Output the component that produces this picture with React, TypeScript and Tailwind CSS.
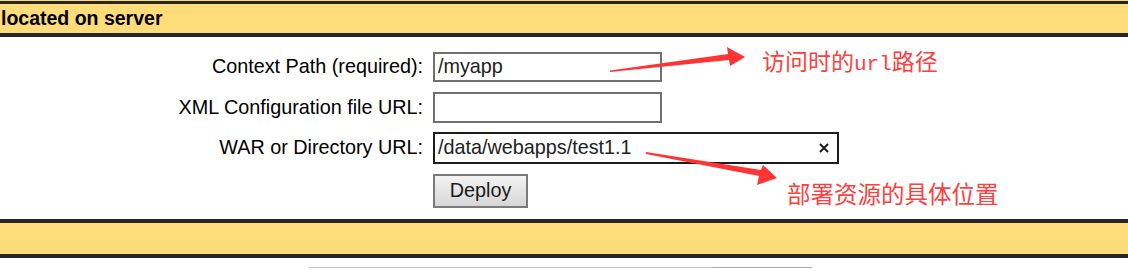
export default function App() {
  return (
    <div className="relative w-[1128px] h-[269px] overflow-hidden bg-white font-['Liberation_Sans',Arial,sans-serif] text-[19.8px] text-black">
      <div className="h-[1px] bg-[#ffdc7a]" />
      <div className="border-t-[3px] border-b-[4px] border-[#262626] bg-[#ffdc7a] h-[36px] flex items-center">
        <span className="font-bold pl-[1px] leading-none text-[19.5px]">located on server</span>
      </div>

      <div className="grid grid-cols-[423px_auto] gap-x-[10px] items-center pt-[15px] pb-[11px]">
        <div className="text-right">Context Path (required):</div>
        <div className="w-[229px] h-[30px] border-2 border-[#707070] flex items-center pl-[3px] text-[#222]">/myapp</div>

        <div className="text-right mt-[10px]">XML Configuration file URL:</div>
        <div className="w-[229px] h-[31px] border-2 border-[#707070] mt-[10px]" />

        <div className="text-right mt-[9px]">WAR or Directory URL:</div>
        <div className="w-[406px] h-[32px] border-2 border-[#1c1c1c] mt-[9px] flex items-center justify-between pl-[3px] pr-[8px] text-[#222]">
          <span>/data/webapps/test1.1</span>
          <svg width="10" height="10" viewBox="0 0 10 10">
            <path d="M1 1L9 9M9 1L1 9" stroke="#1a1a1a" strokeWidth="2" />
          </svg>
        </div>

        <div />
        <button className="w-[95px] h-[34px] mt-[10px] border-2 border-[#7a7a7a] bg-gradient-to-b from-[#f3f3f3] to-[#d6d6d6] text-[#1a1a1a] flex items-center justify-center">
          Deploy
        </button>
      </div>

      <div className="border-t-[4px] border-b-[4px] border-[#262626] bg-[#ffdc7a] h-[39px]" />
      <div className="flex pl-[308px] pt-[9px]">
        <div className="w-[405px] h-[1px] bg-[#c8c8c8]" />
        <div className="w-[99px] h-[1px] bg-[#a9a9a9]" />
      </div>

      <div className="absolute left-[762px] top-[49px] text-[23px] leading-none text-[#ff4040] font-['Noto_Sans_CJK_SC',sans-serif] flex items-baseline">
        访问时的<span className="font-['Liberation_Mono',monospace] text-[21px]">url</span>路径
      </div>
      <div className="absolute left-[787px] top-[182px] text-[23.5px] leading-none text-[#ff4040] font-['Noto_Sans_CJK_SC',sans-serif]">
        部署资源的具体位置
      </div>

      <svg className="absolute left-0 top-0 pointer-events-none" width="1128" height="269">
        <polygon points="610,70.5 728,54 727,47 745,57 730,66 729,60 610,72" fill="#ff3535" />
        <polygon points="646,152 761,170 763,165 777,178 757,185 759,176 646,154" fill="#ff3535" />
      </svg>
    </div>
  );
}
